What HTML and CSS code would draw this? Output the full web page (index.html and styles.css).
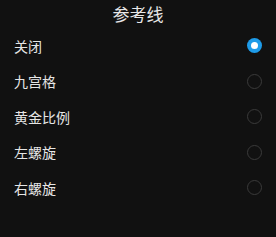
FILE: index.html
```html
<!DOCTYPE html>
<html lang="zh">
<head>
  <meta charset="UTF-8">
  <meta name="viewport" content="width=device-width, initial-scale=1.0">
  <title>参考线</title>
  <link rel="stylesheet" href="styles.css">
</head>
<body>
  <div class="sheet">
    <h1 class="title">参考线</h1>
    <ul class="options">
      <li class="option">
        <span class="label">关闭</span>
        <span class="radio checked"></span>
      </li>
      <li class="option">
        <span class="label">九宫格</span>
        <span class="radio"></span>
      </li>
      <li class="option">
        <span class="label">黄金比例</span>
        <span class="radio"></span>
      </li>
      <li class="option">
        <span class="label">左螺旋</span>
        <span class="radio"></span>
      </li>
      <li class="option">
        <span class="label">右螺旋</span>
        <span class="radio"></span>
      </li>
    </ul>
  </div>
</body>
</html>
```

FILE: styles.css
```css
body {
  margin: 0;
  background-color: #111111;
  font-family: "Noto Sans CJK SC", "Noto Sans", sans-serif;
  color: #e6e6e6;
}
.sheet {
  width: 276px;
  height: 237px;
}
.title {
  margin: 0;
  height: 28px;
  line-height: 28px;
  font-size: 17px;
  font-weight: normal;
  text-align: center;
  color: #e8e8e8;
}
.options {
  list-style-type: none;
  margin: 0;
  padding: 0;
}
.option {
  display: flex;
  align-items: center;
  justify-content: space-between;
  height: 35.5px;
  padding: 0 14px 0 14px;
}
.label {
  font-size: 14px;
}
.radio {
  box-sizing: border-box;
  width: 15px;
  height: 15px;
  border: 1px solid #3a3a3a;
  border-radius: 50%;
}
.radio.checked {
  border: none;
  background-color: #1e9be8;
  display: flex;
  align-items: center;
  justify-content: center;
}
.radio.checked::after {
  content: "";
  width: 7px;
  height: 7px;
  border-radius: 50%;
  background-color: #ffffff;
}
```
